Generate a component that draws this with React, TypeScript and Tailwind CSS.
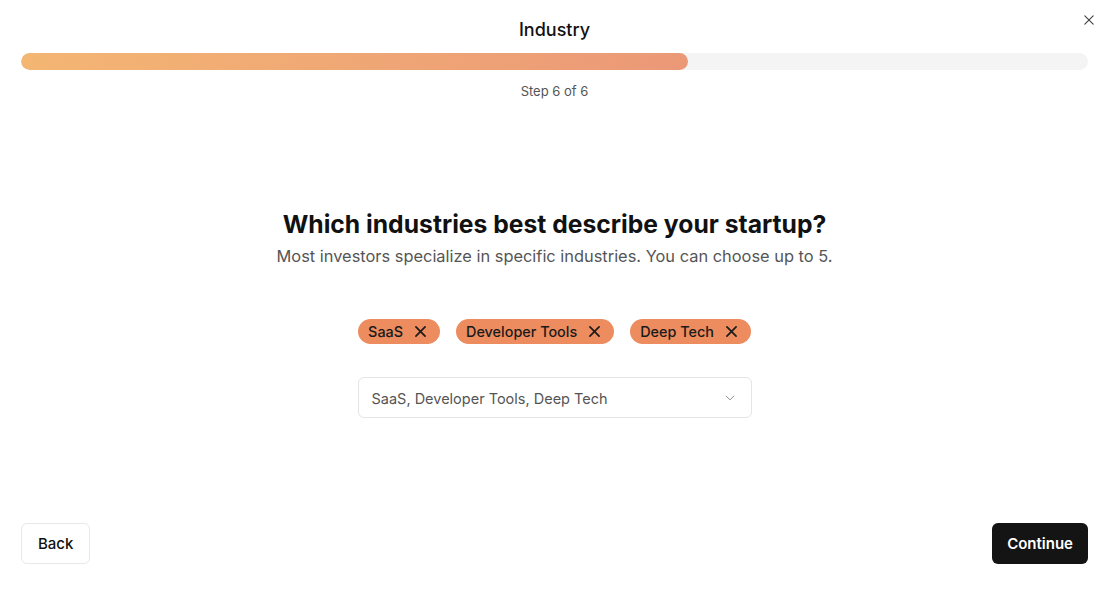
import React from "react";

function XIcon({ className = "" }: { className?: string }) {
  return (
    <svg viewBox="0 0 12 12" className={className} fill="none" stroke="currentColor" strokeWidth={1.8} strokeLinecap="round">
      <path d="M1 1 11 11" />
      <path d="M11 1 1 11" />
    </svg>
  );
}

function Chip({ label }: { label: string }) {
  return (
    <div className="flex h-[25px] items-center gap-[12px] rounded-full bg-[#ec8c5f] pl-[10px] pr-[14px] text-[14.4px] font-medium leading-none text-[#1a1a1a]">
      <span className="pt-[1px]">{label}</span>
      <XIcon className="h-[11px] w-[11px]" />
    </div>
  );
}

export default function App() {
  return (
    <div className="relative flex h-[600px] w-full flex-col bg-white pb-[36px] pl-[21px] pr-[19px] pt-[18px] text-[#111]" style={{ fontFamily: "Inter, 'Noto Sans', sans-serif" }}>
      <button className="absolute right-[13px] top-[15px] text-[#444]">
        <svg viewBox="0 0 12 12" className="h-[10px] w-[10px]" fill="none" stroke="currentColor" strokeWidth={1.4} strokeLinecap="round">
          <path d="M1 1 11 11" />
          <path d="M11 1 1 11" />
        </svg>
      </button>
      <h1 className="text-center text-[18px] font-medium leading-[24px]">Industry</h1>
      <div className="mt-[11px] h-[17px] w-full overflow-hidden rounded-full bg-[#f4f4f4]">
        <div className="h-full w-[62.5%] rounded-full bg-gradient-to-r from-[#f4b673] to-[#eb9877]" />
      </div>
      <p className="mt-[12px] text-center text-[13px] leading-[18px] text-[#555]">Step 6 of 6</p>

      <div className="mt-[108px] flex flex-col items-center">
        <h2 className="text-[24.7px] font-bold leading-[32px] text-[#111]">Which industries best describe your startup?</h2>
        <p className="mt-[4px] text-[16.4px] leading-[24px] text-[#555]">Most investors specialize in specific industries. You can choose up to 5.</p>
        <div className="mt-[51px] flex gap-[16px]">
          <Chip label="SaaS" />
          <Chip label="Developer Tools" />
          <Chip label="Deep Tech" />
        </div>
        <button className="mt-[33px] flex h-[41px] w-[394px] items-center justify-between rounded-md border border-[#e5e5e5] bg-white pl-[13px] pr-[16px] pt-[1px] text-[14.5px] text-[#555]">
          <span className="pt-[1px]">SaaS, Developer Tools, Deep Tech</span>
          <svg viewBox="0 0 12 8" className="h-[6px] w-[10px] text-[#888]" fill="none" stroke="currentColor" strokeWidth={1.3} strokeLinecap="round" strokeLinejoin="round">
            <path d="M1 1.5 6 6.5 11 1.5" />
          </svg>
        </button>
      </div>

      <div className="mt-auto flex items-center justify-between">
        <button className="h-[41px] rounded-md border border-[#e8e8e8] bg-white px-[16px] pt-[2px] text-[15px] font-medium text-[#111]">Back</button>
        <button className="h-[41px] rounded-md bg-[#141414] px-[15px] pt-[2px] text-[15px] font-semibold text-white">Continue</button>
      </div>
    </div>
  );
}
